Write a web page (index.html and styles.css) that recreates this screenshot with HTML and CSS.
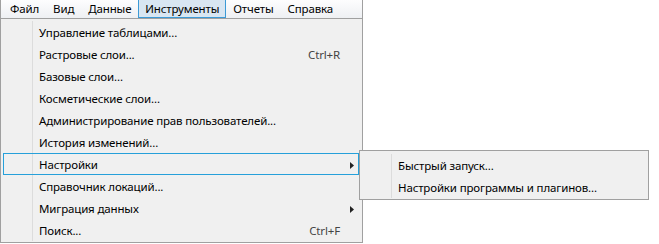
FILE: index.html
```html
<!DOCTYPE html>
<html lang="ru">
<head>
<meta charset="utf-8">
<title>Меню</title>
<link rel="stylesheet" href="styles.css">
</head>
<body>
<div class="window">
  <nav class="menubar">
    <span class="top-item">Файл</span>
    <span class="top-item">Вид</span>
    <span class="top-item">Данные</span>
    <span class="top-item is-open">Инструменты</span>
    <span class="top-item">Отчеты</span>
    <span class="top-item">Справка</span>
  </nav>
  <div class="dropdown">
    <ul class="menu-list">
      <li class="menu-item"><span class="label">Управление таблицами...</span><span class="arrow-cell"></span></li>
      <li class="menu-item"><span class="label">Растровые слои...</span><span class="shortcut">Ctrl+R</span><span class="arrow-cell"></span></li>
      <li class="menu-item"><span class="label">Базовые слои...</span><span class="arrow-cell"></span></li>
      <li class="menu-item"><span class="label">Косметические слои...</span><span class="arrow-cell"></span></li>
      <li class="menu-item"><span class="label">Администрирование прав пользователей...</span><span class="arrow-cell"></span></li>
      <li class="menu-item"><span class="label">История изменений...</span><span class="arrow-cell"></span></li>
      <li class="menu-item is-hot"><span class="label">Настройки</span><span class="arrow-cell"><svg class="arrow" width="4" height="7" viewBox="0 0 4 7"><polygon points="0,0 4,3.5 0,7" fill="#222"/></svg></span>
        <div class="submenu">
          <ul class="menu-list sub-list">
            <li class="menu-item"><span class="label">Быстрый запуск...</span><span class="arrow-cell"></span></li>
            <li class="menu-item"><span class="label">Настройки программы и плагинов...</span><span class="arrow-cell"></span></li>
          </ul>
        </div>
      </li>
      <li class="menu-item"><span class="label">Справочник локаций...</span><span class="arrow-cell"></span></li>
      <li class="menu-item"><span class="label">Миграция данных</span><span class="arrow-cell"><svg class="arrow" width="4" height="7" viewBox="0 0 4 7"><polygon points="0,0 4,3.5 0,7" fill="#222"/></svg></span></li>
      <li class="menu-item"><span class="label">Поиск...</span><span class="shortcut">Ctrl+F</span><span class="arrow-cell"></span></li>
    </ul>
  </div>
</div>
</body>
</html>
```
FILE: styles.css
```css
html, body {
  margin: 0;
  padding: 0;
  background: #ffffff;
}
body {
  font-family: "Noto Sans", "Open Sans", sans-serif;
  font-size: 11.5px;
  letter-spacing: -0.15px;
  color: #000;
}
.window {
  width: 361px;
  border-right: 1px solid #a0a0a0;
  border-left: 1px solid #a0a0a0;
}
.menubar {
  display: flex;
  height: 18px;
  padding-left: 2px;
  background: linear-gradient(#fdfdfe, #eef0f3);
  align-items: stretch;
}
.top-item {
  display: flex;
  align-items: center;
  padding: 0 6px;
  border: 1px solid transparent;
  border-top: 0;
  line-height: 16px;
}
.top-item.is-open {
  background: #d8e6f2;
  border-color: #3c9ad6;
  border-top: 0;
}
.dropdown {
  background: #f0f0f0;
  border-top: 1px solid #a0a0a0;
  border-bottom: 1px solid #a0a0a0;
}
.menu-list {
  list-style: none;
  margin: 0;
  padding: 2px 0 1px;
  background: linear-gradient(to right, transparent 31px, #dcdcdc 31px, #dcdcdc 32px, transparent 32px);
  background-clip: content-box;
}
.menu-item {
  position: relative;
  display: flex;
  align-items: center;
  height: 20px;
  margin: 0 3px 0 2px;
  padding-left: 35px;
  border: 1px solid transparent;
  white-space: nowrap;
}
.menu-item > .label,
.menu-item > .shortcut {
  margin-top: 1px;
}
.menu-item.is-hot {
  border-color: #26a0da;
}
.label {
  flex: 1;
}
.shortcut {
  color: #444;
}
.arrow-cell {
  display: flex;
  align-items: center;
  width: 18px;
  height: 100%;
  padding-left: 10px;
  box-sizing: border-box;
}
.arrow {
  display: block;
  margin-top: 2px;
}
.submenu {
  position: absolute;
  left: 355px;
  top: -4px;
  width: 288px;
  background: #f0f0f0;
  border: 1px solid #a0a0a0;
}
.sub-list {
  padding: 3px 0 1px;
}
```
